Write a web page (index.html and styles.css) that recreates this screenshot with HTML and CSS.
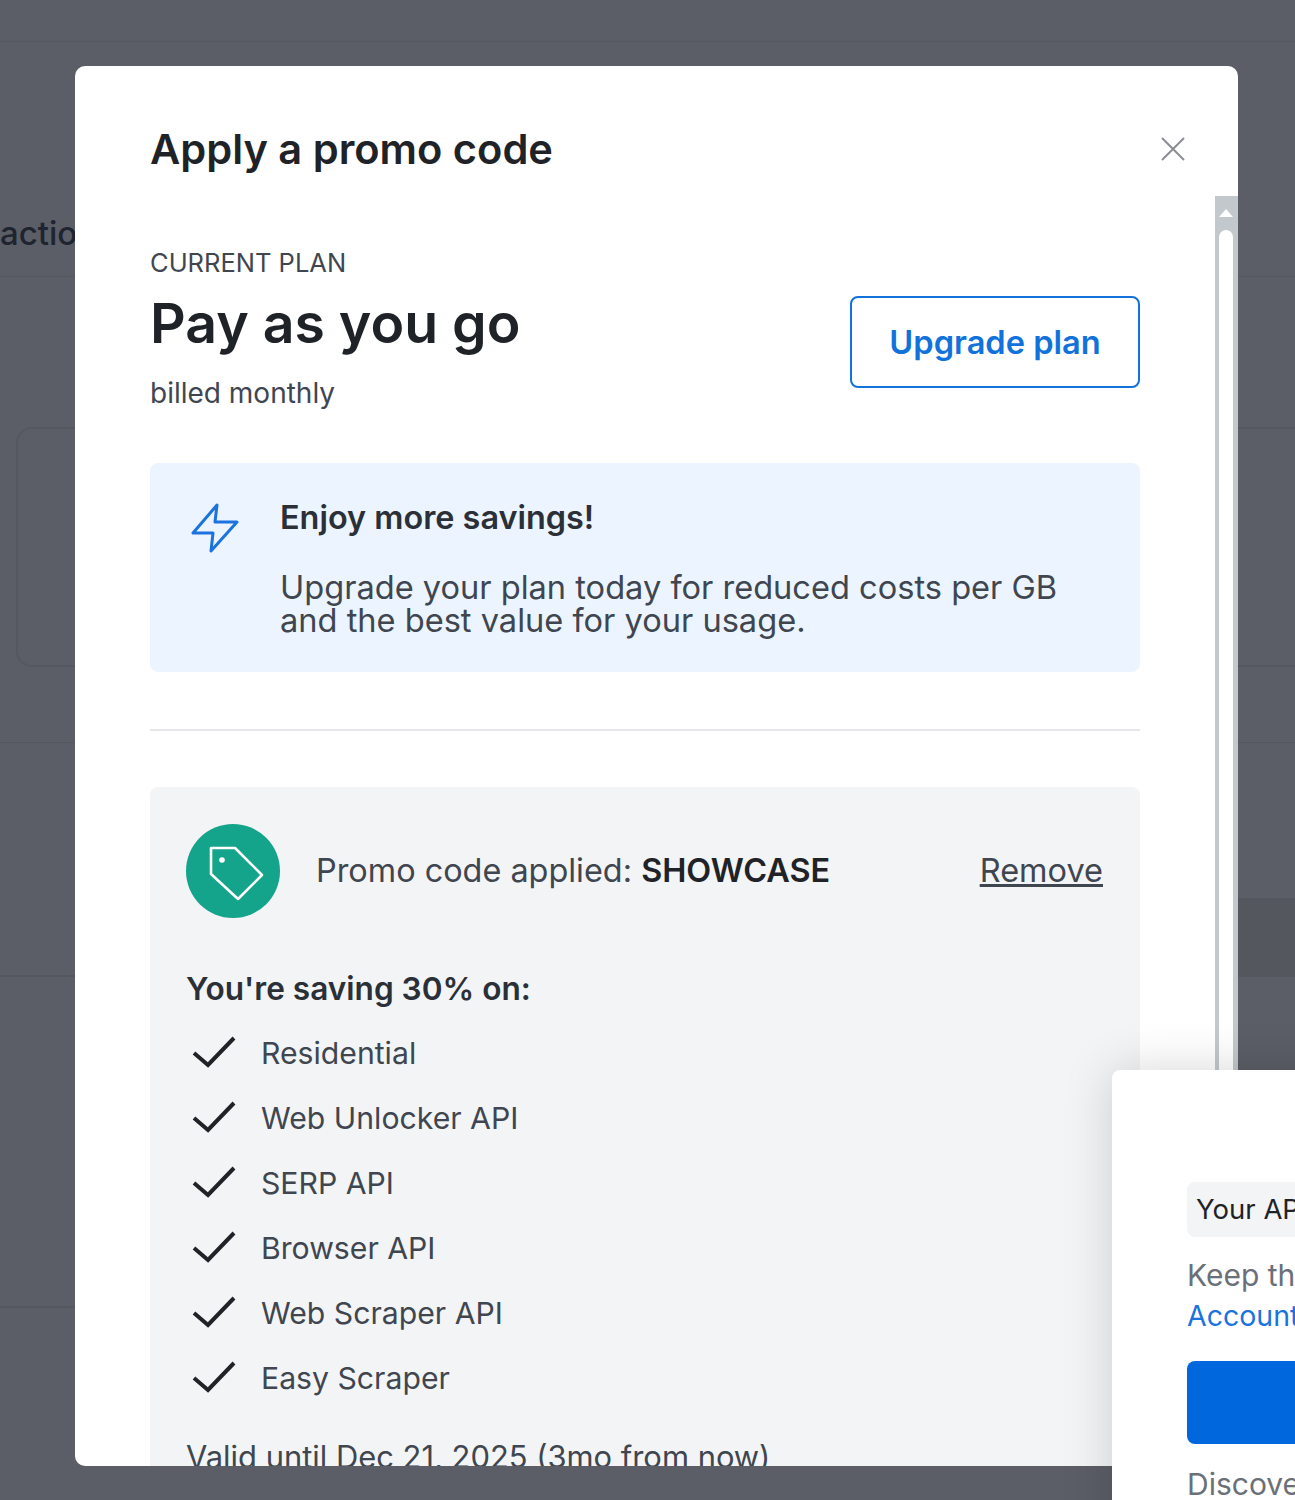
FILE: index.html
```html
<!DOCTYPE html>
<html lang="en">
<head>
<meta charset="utf-8">
<title>Apply a promo code</title>
<link rel="stylesheet" href="styles.css">
</head>
<body>
<div class="page">
  <div class="bg-top"></div>
  <div class="bg-tabs"><span class="bg-tab">actions</span></div>
  <div class="bg-cardzone"><div class="bg-card"></div></div>
  <div class="bg-row bg-row-a"></div>
  <div class="bg-row bg-row-b"></div>
  <div class="bg-row bg-row-c"></div>
</div>

<section class="modal">
  <header class="modal-head">
    <h2 class="modal-title">Apply a promo code</h2>
    <svg class="close" viewBox="0 0 26 26" width="26" height="26"><path d="M2 2l22 22M24 2L2 24"/></svg>
  </header>
  <div class="modal-body">
    <div class="modal-content">
      <div class="plan">
        <div class="plan-info">
          <div class="plan-label">CURRENT PLAN</div>
          <div class="plan-name">Pay as you go</div>
          <div class="plan-bill">billed monthly</div>
        </div>
        <button class="btn-outline">Upgrade plan</button>
      </div>
      <div class="savings">
        <svg class="zap" viewBox="0 0 50 52" width="50" height="52"><path d="M27 3L3 31H23L21 49L47 20H25Z"/></svg>
        <div class="savings-text">
          <div class="savings-title">Enjoy more savings!</div>
          <p class="savings-copy">Upgrade your plan today for reduced costs per GB and the best value for your usage.</p>
        </div>
      </div>
      <hr class="divider">
      <div class="promo">
        <div class="promo-head">
          <span class="promo-badge">
            <svg viewBox="0 0 94 94" width="94" height="94"><path class="tag" d="M25 24H49L76 51L52 75L25 50Z"/><circle class="tag-dot" cx="36" cy="36" r="2.8"/></svg>
          </span>
          <span class="promo-text">Promo code applied: <strong>SHOWCASE</strong></span>
          <a class="promo-remove">Remove</a>
        </div>
        <div class="promo-saving">You're saving 30% on:</div>
        <ul class="promo-list">
          <li><svg class="check" viewBox="0 0 50 34" width="50" height="34"><path d="M8 17L22 29L48 2"/></svg>Residential</li>
          <li><svg class="check" viewBox="0 0 50 34" width="50" height="34"><path d="M8 17L22 29L48 2"/></svg>Web Unlocker API</li>
          <li><svg class="check" viewBox="0 0 50 34" width="50" height="34"><path d="M8 17L22 29L48 2"/></svg>SERP API</li>
          <li><svg class="check" viewBox="0 0 50 34" width="50" height="34"><path d="M8 17L22 29L48 2"/></svg>Browser API</li>
          <li><svg class="check" viewBox="0 0 50 34" width="50" height="34"><path d="M8 17L22 29L48 2"/></svg>Web Scraper API</li>
          <li><svg class="check" viewBox="0 0 50 34" width="50" height="34"><path d="M8 17L22 29L48 2"/></svg>Easy Scraper</li>
        </ul>
        <div class="promo-valid">Valid until Dec 21, 2025 (3mo from now)</div>
      </div>
    </div>
    <div class="scrollbar">
      <svg class="scroll-arrow" viewBox="0 0 14 8" width="14" height="8"><path d="M7 0L14 8H0Z"/></svg>
      <div class="scroll-thumb"></div>
    </div>
  </div>
</section>

<aside class="popup">
  <div class="popup-field">Your API key</div>
  <p class="popup-copy">Keep this key safe<br><a class="popup-link">Account settings</a></p>
  <div class="popup-btn"></div>
  <p class="popup-foot">Discover more</p>
</aside>
</body>
</html>
```
FILE: styles.css
```css
* { box-sizing: border-box; }
html, body { margin: 0; height: 1500px; overflow: hidden; }
body { background: #5b5e66; font-family: Inter, "Liberation Sans", sans-serif; color: #1f2328; }

.page { display: flex; flex-direction: column; height: 1500px; overflow: hidden; }
.bg-top { height: 42px; flex: none; border-bottom: 1px solid #55585f; }
.bg-tabs { height: 235px; flex: none; border-bottom: 1px solid #54575e; padding-top: 172px; }
.bg-tab { font-size: 33px; line-height: 38px; font-weight: 500; color: #1e2430; }
.bg-cardzone { height: 466px; flex: none; padding: 150px 0 76px 16px; border-bottom: 1px solid #54575e; }
.bg-card { height: 240px; margin-right: -40px; border: 2px solid #55585f; border-radius: 16px; }
.bg-row { flex: none; border-bottom: 2px solid #54575e; }
.bg-row-a { height: 155px; border-bottom: 0; }
.bg-row-b { height: 79px; background: linear-gradient(to right, #5b5e66 6%, #54575e 94%); }
.bg-row-c { height: 331px; }

.modal { position: absolute; left: 75px; top: 66px; width: 1163px; height: 1400px; background: #fff; border-radius: 10px; overflow: hidden; display: flex; flex-direction: column; }
.modal-head { height: 130px; flex: none; display: flex; justify-content: space-between; align-items: center; padding: 59px 52px 23px 75px; }
.modal-title { margin: 0; font-size: 41.6px; line-height: 48px; font-weight: 600; color: #1f2328; }
.close { fill: none; stroke: #8a8d92; stroke-width: 2; }

.modal-body { flex: 1; min-height: 0; display: flex; }
.modal-content { flex: 1; min-width: 0; padding: 50px 75px 0; overflow: hidden; }
.scrollbar { width: 23px; flex: none; background: #c2c8cc; padding: 13px 5px 0 4px; display: flex; flex-direction: column; align-items: center; gap: 13px; }
.scroll-arrow { fill: #fff; flex: none; }
.scroll-thumb { width: 14px; flex: 1; background: #fff; border-radius: 7px 7px 0 0; }

.plan { display: flex; justify-content: space-between; align-items: flex-start; }
.plan-label { font-size: 25.5px; line-height: 34px; color: #3f4650; }
.plan-name { margin-top: 13px; font-size: 55.4px; line-height: 60px; font-weight: 600; color: #1f2328; }
.plan-bill { font-size: 28px; line-height: 40px; margin-top: 20px; color: #3f4650; }
.btn-outline { width: 290px; height: 92px; margin-top: 50px; background: #fff; border: 2px solid #1272dc; border-radius: 8px; font: 600 32.6px Inter, "Liberation Sans", sans-serif; color: #1272dc; }

.savings { margin-top: 50px; height: 209px; padding: 37px 40px 0; display: flex; gap: 40px; background: #ecf5ff; border-radius: 8px; }
.zap { flex: none; margin-top: 2px; fill: none; stroke: #1a73de; stroke-width: 3; stroke-linejoin: round; }
.savings-title { font-size: 32.4px; line-height: 36px; font-weight: 600; color: #2b3038; }
.savings-copy { margin: 35px 0 0; font-size: 32.6px; line-height: 33px; color: #3f4650; }

.divider { margin: 57px 0 0; border: 0; border-top: 2px solid #e5e7eb; }

.promo { margin-top: 56px; padding: 37px 37px 0 36px; height: 800px; background: #f3f4f6; border-radius: 8px; }
.promo-head { display: flex; align-items: center; }
.promo-badge { width: 94px; height: 94px; flex: none; background: #14a38b; border-radius: 50%; display: flex; }
.tag { fill: none; stroke: #fff; stroke-width: 2.6; stroke-linejoin: round; }
.tag-dot { fill: #fff; }
.promo-text { flex: 1; margin-left: 36px; padding-bottom: 2px; font-size: 32.4px; color: #3f4650; }
.promo-text strong { font-weight: 600; color: #1f2328; }
.promo-remove { padding-bottom: 2px; font-size: 32.5px; color: #3f4650; text-decoration: underline; }
.promo-saving { margin-top: 51px; font-size: 31.6px; line-height: 40px; font-weight: 600; color: #2b3038; }
.promo-list { list-style: none; margin: 11px 0 0; padding: 0; }
.promo-list li { height: 65px; display: flex; align-items: center; gap: 25px; font-size: 30.2px; color: #3f4650; }
.check { flex: none; overflow: visible; fill: none; stroke: #1f2328; stroke-width: 4; }
.promo-valid { margin-top: 29px; font-size: 30.9px; line-height: 36px; color: #3f4650; }

.popup { position: absolute; left: 1112px; top: 1070px; width: 500px; height: 500px; padding: 112px 75px 0; background: #fff; border-radius: 8px 0 0 0; box-shadow: 0 0 50px rgba(0, 0, 0, .16); white-space: nowrap; }
.popup-field { height: 55px; padding: 0 9px; background: #f3f4f6; border-radius: 8px; font-size: 27.5px; line-height: 55px; color: #1f2328; }
.popup-copy { margin: 18px 0 0; font-size: 30px; line-height: 40px; color: #6b7078; }
.popup-link { font-size: 28.5px; color: #1a73de; }
.popup-btn { margin-top: 25px; height: 83px; background: #0067dc; border-radius: 8px; }
.popup-foot { margin: 22px 0 0; font-size: 30px; line-height: 36px; color: #6b7078; }
```
